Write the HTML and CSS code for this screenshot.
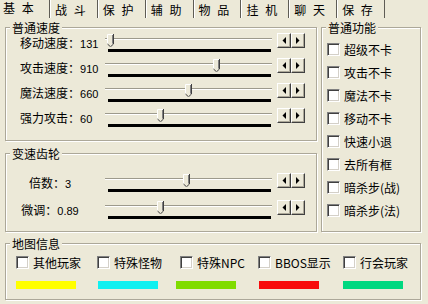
FILE: index.html
```html
<!DOCTYPE html>
<html lang="zh-CN">
<head>
<meta charset="utf-8">
<title>设置</title>
<link rel="stylesheet" href="styles.css">
</head>
<body>
<div class="tabs">
  <div class="tab active">基 本</div>
  <div class="tab">战 斗</div>
  <div class="tab">保 护</div>
  <div class="tab">辅 助</div>
  <div class="tab">物 品</div>
  <div class="tab">挂 机</div>
  <div class="tab">聊 天</div>
  <div class="tab">保 存</div>
</div>
<div class="panel">
  <fieldset class="group speed">
    <legend>普通速度</legend>
    <div class="rows">
      <div class="row">
        <span class="lbl">移动速度：<span class="num">131</span></span>
        <div class="slider"><div class="groove"></div><div class="bar"></div><svg class="thumb" style="left:2px" width="7" height="13" viewBox="0 0 7 13"><path d="M0 0h7v10l-3.5 3-3.5-3z" fill="#ece9d8"/><path d="M0.5 10V0.5H6" stroke="#fff" fill="none"/><path d="M6.5 0V10L3.5 12.8L0.5 10" stroke="#404040" fill="none"/><path d="M5.5 1V9.6" stroke="#808080" fill="none"/></svg></div>
        <div class="spin"><span class="btn"><svg width="4" height="7" viewBox="0 0 4 7"><path d="M4 0V7L0.5 3.5z"/></svg></span><span class="btn"><svg width="4" height="7" viewBox="0 0 4 7"><path d="M0 0V7L3.5 3.5z"/></svg></span></div>
      </div>
      <div class="row">
        <span class="lbl">攻击速度：<span class="num">910</span></span>
        <div class="slider"><div class="groove"></div><div class="bar"></div><svg class="thumb" style="left:108px" width="7" height="13" viewBox="0 0 7 13"><path d="M0 0h7v10l-3.5 3-3.5-3z" fill="#ece9d8"/><path d="M0.5 10V0.5H6" stroke="#fff" fill="none"/><path d="M6.5 0V10L3.5 12.8L0.5 10" stroke="#404040" fill="none"/><path d="M5.5 1V9.6" stroke="#808080" fill="none"/></svg></div>
        <div class="spin"><span class="btn"><svg width="4" height="7" viewBox="0 0 4 7"><path d="M4 0V7L0.5 3.5z"/></svg></span><span class="btn"><svg width="4" height="7" viewBox="0 0 4 7"><path d="M0 0V7L3.5 3.5z"/></svg></span></div>
      </div>
      <div class="row">
        <span class="lbl">魔法速度：<span class="num">660</span></span>
        <div class="slider"><div class="groove"></div><div class="bar"></div><svg class="thumb" style="left:80px" width="7" height="13" viewBox="0 0 7 13"><path d="M0 0h7v10l-3.5 3-3.5-3z" fill="#ece9d8"/><path d="M0.5 10V0.5H6" stroke="#fff" fill="none"/><path d="M6.5 0V10L3.5 12.8L0.5 10" stroke="#404040" fill="none"/><path d="M5.5 1V9.6" stroke="#808080" fill="none"/></svg></div>
        <div class="spin"><span class="btn"><svg width="4" height="7" viewBox="0 0 4 7"><path d="M4 0V7L0.5 3.5z"/></svg></span><span class="btn"><svg width="4" height="7" viewBox="0 0 4 7"><path d="M0 0V7L3.5 3.5z"/></svg></span></div>
      </div>
      <div class="row">
        <span class="lbl">强力攻击：<span class="num">60</span></span>
        <div class="slider"><div class="groove"></div><div class="bar"></div><svg class="thumb" style="left:52px" width="7" height="13" viewBox="0 0 7 13"><path d="M0 0h7v10l-3.5 3-3.5-3z" fill="#ece9d8"/><path d="M0.5 10V0.5H6" stroke="#fff" fill="none"/><path d="M6.5 0V10L3.5 12.8L0.5 10" stroke="#404040" fill="none"/><path d="M5.5 1V9.6" stroke="#808080" fill="none"/></svg></div>
        <div class="spin"><span class="btn"><svg width="4" height="7" viewBox="0 0 4 7"><path d="M4 0V7L0.5 3.5z"/></svg></span><span class="btn"><svg width="4" height="7" viewBox="0 0 4 7"><path d="M0 0V7L3.5 3.5z"/></svg></span></div>
      </div>
    </div>
  </fieldset>

  <fieldset class="group gear">
    <legend>变速齿轮</legend>
    <div class="rows">
      <div class="row">
        <span class="lbl">倍数：<span class="num">3</span></span>
        <div class="slider"><div class="groove"></div><div class="bar"></div><svg class="thumb" style="left:78px" width="7" height="13" viewBox="0 0 7 13"><path d="M0 0h7v10l-3.5 3-3.5-3z" fill="#ece9d8"/><path d="M0.5 10V0.5H6" stroke="#fff" fill="none"/><path d="M6.5 0V10L3.5 12.8L0.5 10" stroke="#404040" fill="none"/><path d="M5.5 1V9.6" stroke="#808080" fill="none"/></svg></div>
        <div class="spin"><span class="btn"><svg width="4" height="7" viewBox="0 0 4 7"><path d="M4 0V7L0.5 3.5z"/></svg></span><span class="btn"><svg width="4" height="7" viewBox="0 0 4 7"><path d="M0 0V7L3.5 3.5z"/></svg></span></div>
      </div>
      <div class="row">
        <span class="lbl">微调：<span class="num">0.89</span></span>
        <div class="slider"><div class="groove"></div><div class="bar"></div><svg class="thumb" style="left:52px" width="7" height="13" viewBox="0 0 7 13"><path d="M0 0h7v10l-3.5 3-3.5-3z" fill="#ece9d8"/><path d="M0.5 10V0.5H6" stroke="#fff" fill="none"/><path d="M6.5 0V10L3.5 12.8L0.5 10" stroke="#404040" fill="none"/><path d="M5.5 1V9.6" stroke="#808080" fill="none"/></svg></div>
        <div class="spin"><span class="btn"><svg width="4" height="7" viewBox="0 0 4 7"><path d="M4 0V7L0.5 3.5z"/></svg></span><span class="btn"><svg width="4" height="7" viewBox="0 0 4 7"><path d="M0 0V7L3.5 3.5z"/></svg></span></div>
      </div>
    </div>
  </fieldset>

  <fieldset class="group func">
    <legend>普通功能</legend>
    <div class="checks">
      <label class="chk"><span class="box"></span>超级不卡</label>
      <label class="chk"><span class="box"></span>攻击不卡</label>
      <label class="chk"><span class="box"></span>魔法不卡</label>
      <label class="chk"><span class="box"></span>移动不卡</label>
      <label class="chk"><span class="box"></span>快速小退</label>
      <label class="chk"><span class="box"></span>去所有框</label>
      <label class="chk"><span class="box"></span>暗杀步(战)</label>
      <label class="chk"><span class="box"></span>暗杀步(法)</label>
    </div>
  </fieldset>

  <fieldset class="group map">
    <legend>地图信息</legend>
    <div class="map-checks">
      <label class="chk"><span class="box"></span>其他玩家</label>
      <label class="chk"><span class="box"></span>特殊怪物</label>
      <label class="chk"><span class="box"></span>特殊NPC</label>
      <label class="chk"><span class="box"></span>BBOS显示</label>
      <label class="chk"><span class="box"></span>行会玩家</label>
    </div>
    <div class="map-bars">
      <span class="swatch yellow"></span>
      <span class="swatch cyan"></span>
      <span class="swatch lime"></span>
      <span class="swatch red"></span>
      <span class="swatch green"></span>
    </div>
  </fieldset>
</div>
</body>
</html>
```

FILE: styles.css
```css
* { box-sizing: border-box; }

html, body {
  margin: 0;
  background: #ece9d8;
}

body {
  width: 428px;
  height: 304px;
  overflow: hidden;
  font-family: "Noto Sans CJK SC", sans-serif;
  font-size: 12px;
  color: #000;
}

/* ---- tabs ---- */
.tabs {
  display: flex;
  height: 19px;
}

.tab {
  width: 47.86px;
  height: 18px;
  padding: 2px 0 0 4px;
  line-height: 16px;
  word-spacing: 4px;
  white-space: nowrap;
  border-left: 1px solid #fff;
  border-right: 1px solid #5e5c55;
}

.tab.active {
  width: 50px;
  padding: 0 0 0 3px;
  border-left: none;
}

/* ---- panel ---- */
.panel {
  display: grid;
  grid-template-columns: 312px 100px;
  grid-template-rows: 122px 87px 65px;
  column-gap: 4px;
  row-gap: 4px;
  padding-left: 5px;
}

.group {
  margin: 0;
  padding: 0;
  min-width: 0;
  border: 1px solid #aca899;
  box-shadow: inset 1px 1px #fff, 1px 1px #fff;
}

.group legend {
  margin-left: 4px;
  padding: 0 2px;
  line-height: 17px;
  background: #ece9d8;
}

.speed { grid-column: 1; grid-row: 1; }
.gear { grid-column: 1; grid-row: 2; }
.func { grid-column: 2; grid-row: 1 / span 2; }
.map { grid-column: 1 / span 2; grid-row: 3; margin: -1px 0 1px; }

/* ---- slider rows ---- */
.speed .rows { margin-top: -3px; }
.gear .rows { margin-top: 11px; }

.row {
  display: flex;
  align-items: flex-start;
  height: 25px;
}

.gear .row { height: 27px; }

.lbl {
  width: 99px;
  padding: 2px 0 0 14px;
  line-height: 16px;
  white-space: nowrap;
}

.gear .lbl {
  padding: 2px 11px 0 0;
  text-align: center;
}

.num {
  font-family: "Liberation Sans", sans-serif;
  font-size: 11px;
}

.slider {
  position: relative;
  width: 167px;
  height: 25px;
}

.groove {
  margin-top: 5px;
  height: 2px;
  border-top: 1px solid #9d9a8c;
  border-bottom: 1px solid #fff;
}

.bar {
  margin: 9px 1px 0 3px;
  height: 3px;
  background: #000;
}

.thumb {
  position: absolute;
  top: 1px;
}

.spin {
  display: flex;
  margin-left: 5px;
}

.btn {
  display: flex;
  align-items: center;
  justify-content: center;
  width: 14px;
  height: 15px;
  background: #ece9d8;
  border-top: 1px solid #fff;
  border-left: 1px solid #fff;
  border-right: 1px solid #404040;
  border-bottom: 1px solid #404040;
  box-shadow: inset -1px -1px #aca899;
}

.btn svg { fill: #000; }

/* ---- checkboxes ---- */
.chk {
  display: flex;
  align-items: center;
  white-space: nowrap;
}

.box {
  flex: none;
  width: 13px;
  height: 13px;
  margin-right: 4px;
  background: #fff;
  border-top: 1px solid #808080;
  border-left: 1px solid #808080;
  border-right: 1px solid #fff;
  border-bottom: 1px solid #fff;
  box-shadow: inset 1px 1px #404040, inset -1px -1px #d4d0c8;
}

.checks {
  margin-top: 2px;
  padding-left: 5px;
}

.checks .chk { height: 23px; }

.map-checks {
  display: grid;
  grid-template-columns: 81px 83px 78px 85px 1fr;
  padding-left: 10px;
}

.map-checks .chk { height: 20px; }

.map-bars {
  display: grid;
  grid-template-columns: 82px 78px 83px 84px 1fr;
  padding-left: 10px;
  margin-top: 9px;
}

.swatch {
  display: block;
  width: 60px;
  height: 8px;
}

.yellow { background: #ffff00; }
.cyan { background: #10f0f0; }
.lime { background: #80dc00; }
.red { background: #f80c0c; }
.green { background: #00d880; }
```
